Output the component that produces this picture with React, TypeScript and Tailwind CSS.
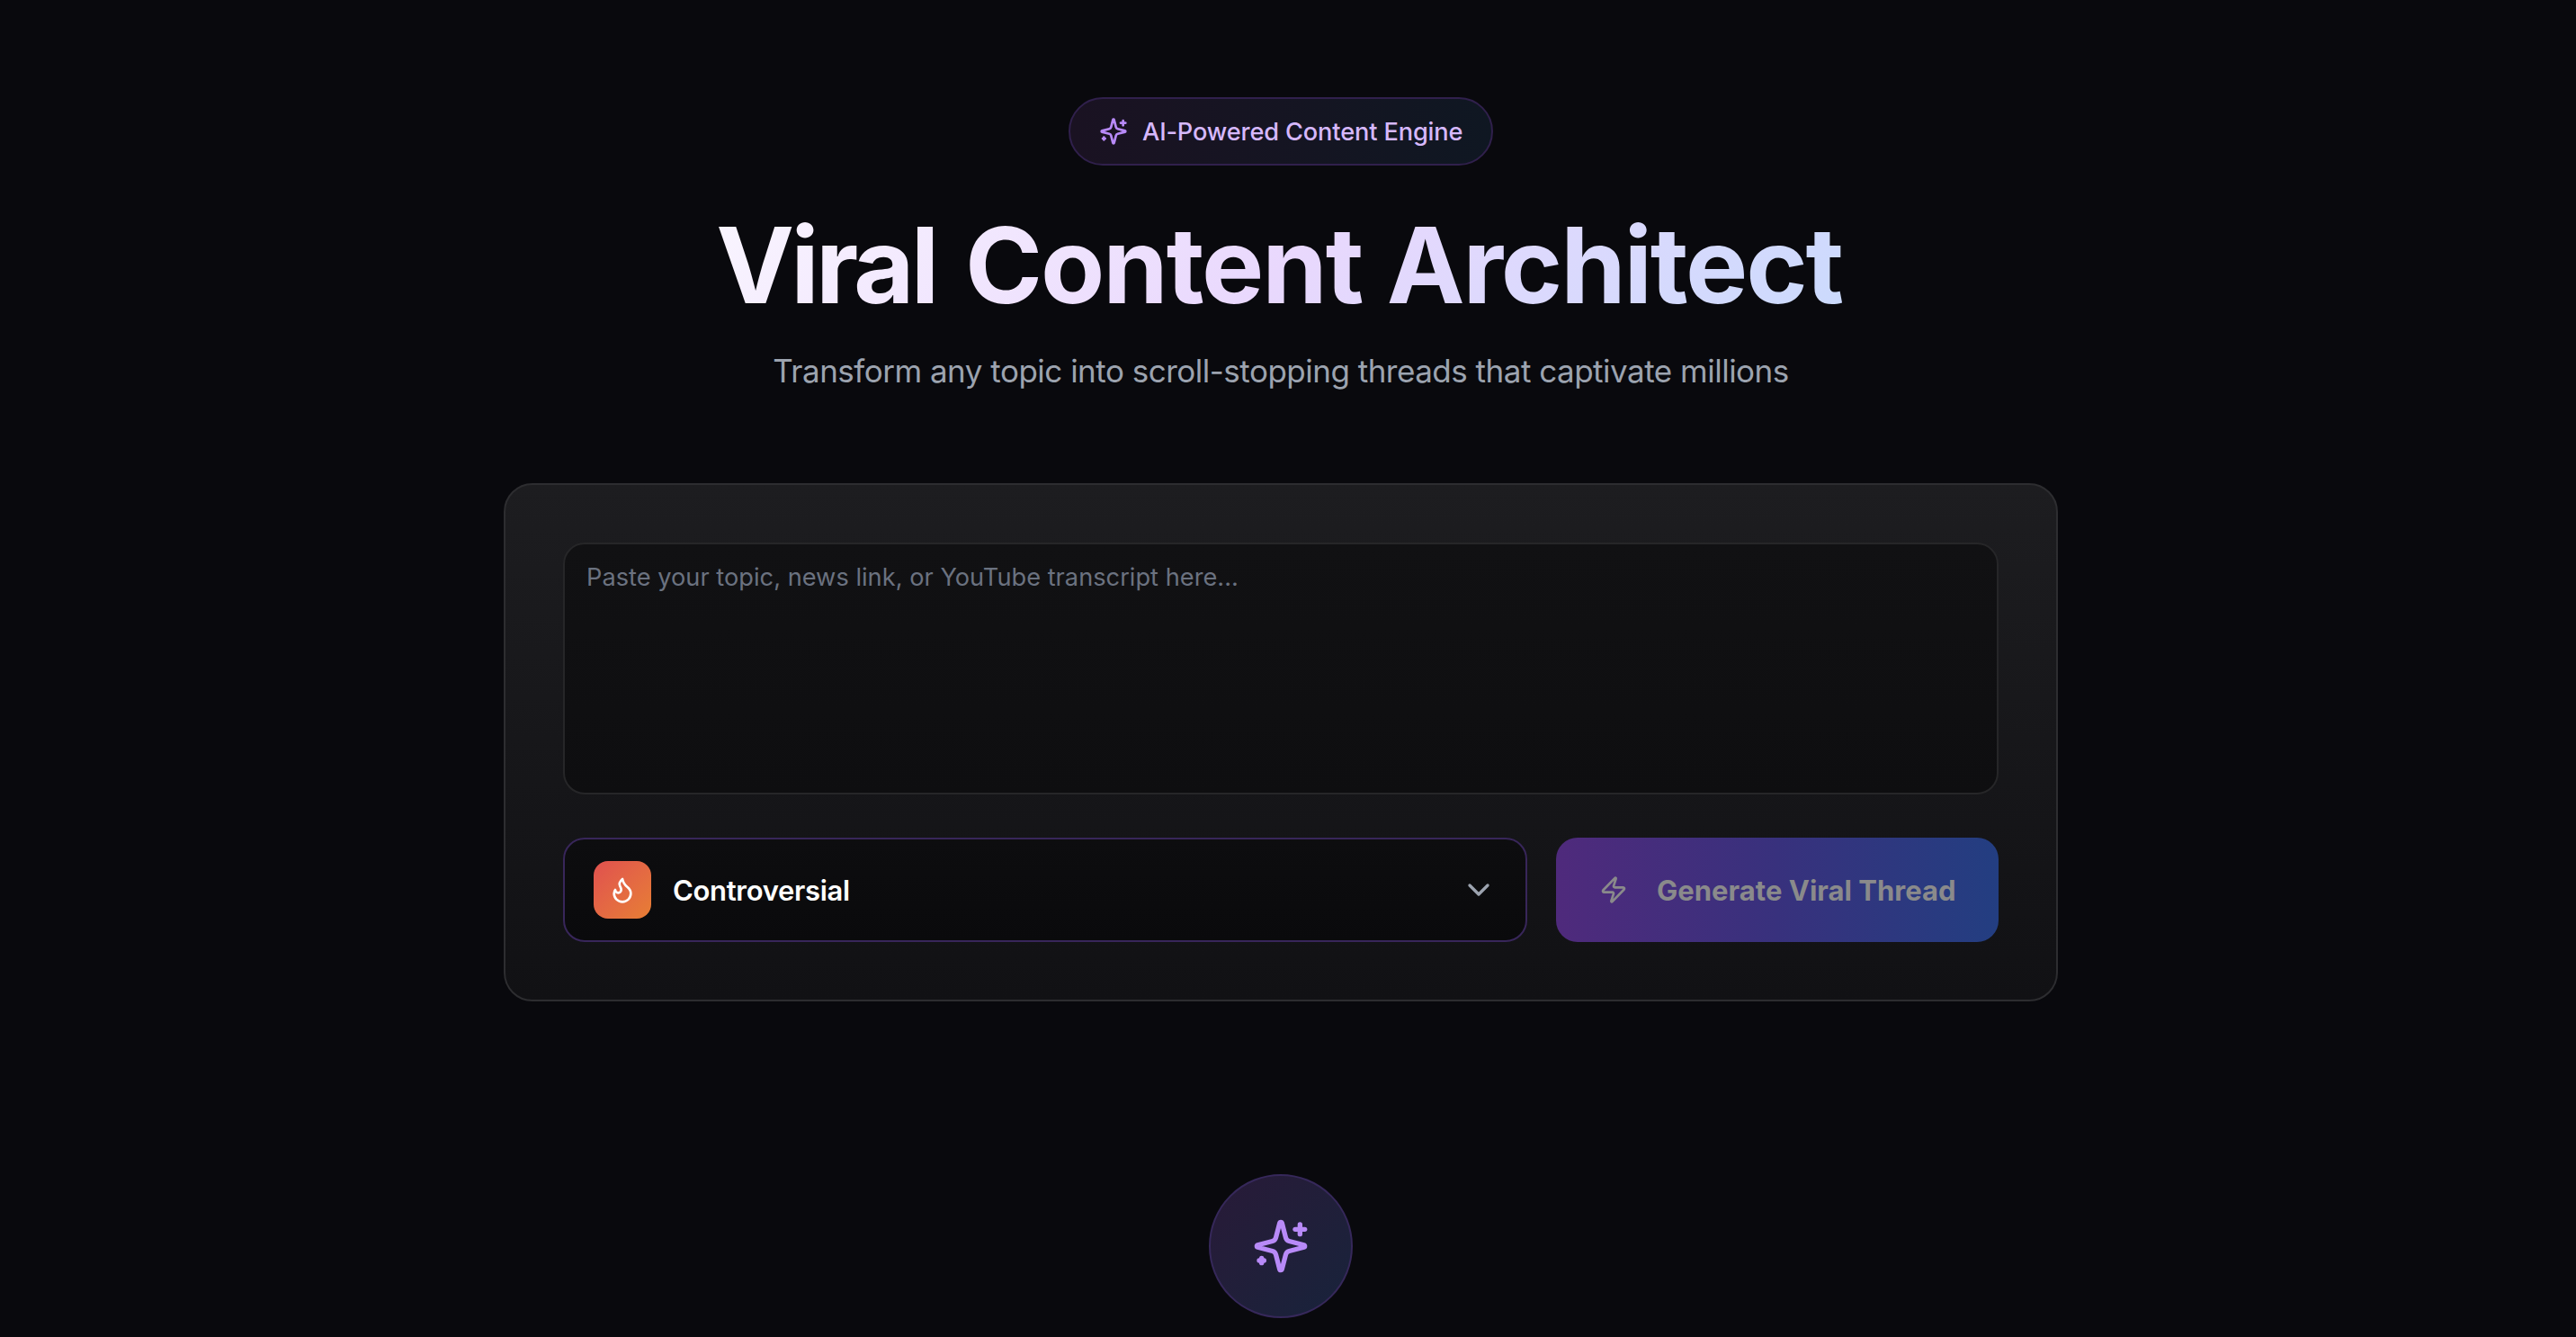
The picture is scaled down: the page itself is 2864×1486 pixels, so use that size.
import { ChevronDown, Zap } from 'lucide-react'
import { ComponentProps, ReactNode, useState } from 'react'

export default function App() {
  const [topic, setTopic] = useState('')

  return (
    <div className="h-screen w-full overflow-hidden bg-[#09090d] font-['Inter',sans-serif]">
      <main className="mx-auto flex w-[1728px] -translate-x-2 flex-col pt-[108px]">
        <Header />

        <section className="mt-24 h-[576px] rounded-[32px] border-2 border-[#2d2d30] bg-linear-to-b from-[#1d1d20] to-[#111114] p-16">
          <textarea
            value={topic}
            onChange={(e) => setTopic(e.target.value)}
            placeholder="Paste your topic, news link, or YouTube transcript here..."
            className="block h-[280px] w-full resize-none rounded-3xl border-2 border-[#262628] bg-linear-to-b from-[#111113] to-[#0e0e10] px-6 pt-[17px] text-[27.2px] leading-10 tracking-[0.02px] text-white outline-none placeholder:text-[#6b7280]"
          />

          <div className="mt-12 flex gap-8">
            <ToneSelect label="Controversial">
              <FlameIcon className="size-8" />
            </ToneSelect>

            <button
              disabled={!topic}
              className="flex h-[116px] w-[492px] items-center gap-8 rounded-3xl bg-linear-to-r/srgb from-[#4f2a7c] via-[#38317d] to-[#233e81] pl-12 text-[#8a8a8b]"
            >
              <Zap className="size-8 shrink-0" />
              <span className="pt-0.5 text-[31px] font-bold tracking-[0.02px] whitespace-nowrap">
                Generate Viral Thread
              </span>
            </button>
          </div>
        </section>

        <div className="mt-48 flex size-40 items-center justify-center self-center rounded-full border-2 border-[#36285a] bg-linear-to-br from-[#281a38] to-[#17233b]">
          <SparklesIcon className="size-16 text-[#b88af8]" />
        </div>
      </main>
    </div>
  )
}

function Header() {
  return (
    <header className="flex flex-col items-center">
      <div className="flex h-[76px] w-[472px] items-center gap-4 rounded-full border-2 border-[#30204c] bg-linear-to-r from-[#1a1222] to-[#0f1722] pl-8">
        <SparklesIcon className="size-8 shrink-0 text-[#b88af8]" />
        <span className="pt-0.5 text-[27.2px] font-medium tracking-[-0.14px] whitespace-nowrap text-[#d6b8fc]">
          AI-Powered Content Engine
        </span>
      </div>

      <h1 className="mt-[51px] w-full bg-linear-[135deg] from-white via-[#e9d8fd] to-[#c0dbfd] bg-clip-text pr-1 text-center text-[116.4px] leading-[120px] font-bold whitespace-nowrap text-transparent">
        <span className="mr-[5px] tracking-[-3.8px]">Viral</span>{' '}
        <span className="tracking-[-2.1px]">Content</span>{' '}
        <span className="tracking-[-2.2px]">Architect</span>
      </h1>

      <p className="mt-7 text-[35px] leading-[58px] tracking-[-0.5px] whitespace-nowrap text-[#9ca3af]">
        Transform any topic into scroll-stopping threads that captivate millions
      </p>
    </header>
  )
}

interface ToneSelectProps {
  label: string
  children: ReactNode
}

function ToneSelect({ label, children }: ToneSelectProps) {
  return (
    <button className="flex h-[116px] flex-1 items-center gap-6 rounded-3xl border-2 border-[#38265a] bg-linear-to-b from-[#0d0d0f] to-[#0a0a0c] px-8 text-white">
      <span className="flex size-16 items-center justify-center rounded-2xl bg-linear-to-br from-[#e0504e] to-[#e77e33]">
        {children}
      </span>
      <span className="pt-0.5 text-[31px] font-semibold tracking-[-0.32px]">
        {label}
      </span>
      <ChevronDown className="ml-auto size-10 text-[#9ca3af]" />
    </button>
  )
}

type Svg = ComponentProps<'svg'>

function Icon({ children, ...rest }: Svg) {
  return (
    <svg
      {...rest}
      viewBox="0 0 24 24"
      fill="none"
      stroke="currentColor"
      strokeWidth="2"
      strokeLinecap="round"
      strokeLinejoin="round"
    >
      {children}
    </svg>
  )
}

function SparklesIcon(props: Svg) {
  return (
    <Icon {...props}>
      <path d="M9.937 15.5A2 2 0 0 0 8.5 14.063l-6.135-1.582a.5.5 0 0 1 0-.962L8.5 9.936A2 2 0 0 0 9.937 8.5l1.582-6.135a.5.5 0 0 1 .963 0L14.063 8.5A2 2 0 0 0 15.5 9.937l6.135 1.581a.5.5 0 0 1 0 .964L15.5 14.063a2 2 0 0 0-1.437 1.437l-1.582 6.135a.5.5 0 0 1-.963 0z" />
      <path d="M20 3v4" />
      <path d="M22 5h-4" />
      <path d="M4 17v2" />
      <path d="M5 18H3" />
    </Icon>
  )
}

function FlameIcon(props: Svg) {
  return (
    <Icon {...props}>
      <path d="M8.5 14.5A2.5 2.5 0 0 0 11 12c0-1.38-.5-2-1-3-1.072-2.143-.224-4.054 2-6 .5 2.5 2 4.9 4 6.5 2 1.6 3 3.5 3 5.5a7 7 0 1 1-14 0c0-1.153.433-2.294 1-3a2.5 2.5 0 0 0 2.5 2.5z" />
    </Icon>
  )
}
